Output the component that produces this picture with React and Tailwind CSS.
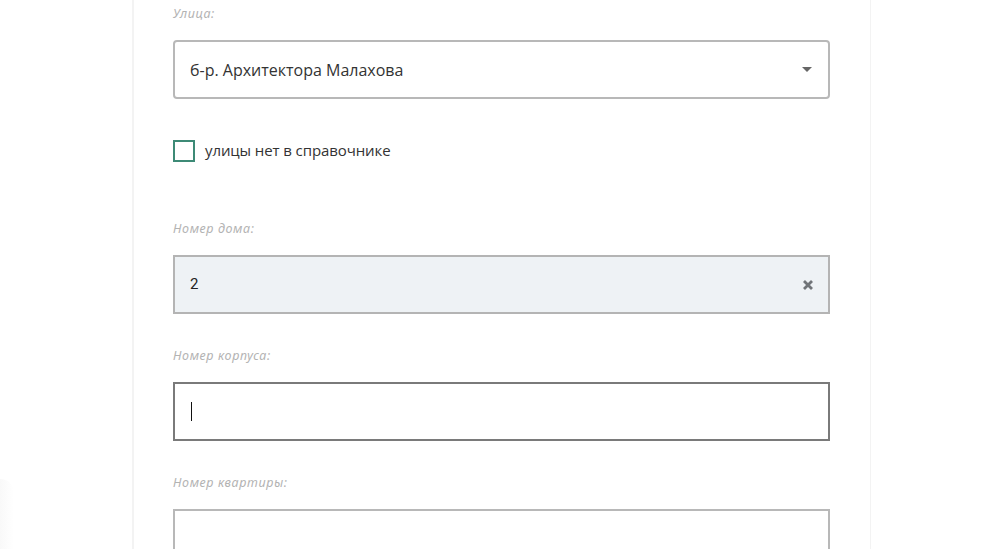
import React from "react";

function Label({ children }) {
  return (
    <div className="h-4 text-[12.5px] leading-4 italic text-[#b3b3b3] tracking-[0.6px]" style={{ fontFamily: '"Noto Sans", "Open Sans", sans-serif' }}>
      {children}
    </div>
  );
}

export default function App() {
  return (
    <div className="w-[986px] h-[549px] overflow-hidden bg-white relative" style={{ fontFamily: '"Open Sans", "Noto Sans", sans-serif' }}>
      <div className="absolute left-0 bottom-0 w-[14px] h-[70px] bg-gradient-to-r from-[#f6f6f6] to-white rounded-tr-full opacity-70" />
      <div className="ml-[132px] w-[739px] h-full border-l-2 border-r border-l-[#f3f3f3] border-r-[#f3f3f3] bg-white pl-[39px] pt-[6px]">
        <Label>Улица:</Label>
        <div className="mt-[18px] w-[657px] h-[59px] border-2 border-[#b8b8b8] rounded-[4px] flex items-center justify-between pl-[15px] pr-[16px]">
          <span className="text-[16px] text-[#333]">б-р. Архитектора Малахова</span>
          <span className="w-0 h-0 border-l-[5px] border-r-[5px] border-t-[5px] border-l-transparent border-r-transparent border-t-[#666]" />
        </div>
        <div className="mt-[41px] flex items-center gap-[10px] h-[22px]">
          <span className="w-[22px] h-[22px] border-2 border-[#3d8a76] bg-white" />
          <span className="text-[15px] text-[#333] tracking-[-0.1px] -mt-[2px]">улицы нет в справочнике</span>
        </div>
        <div className="mt-[59px]">
          <Label>Номер дома:</Label>
        </div>
        <div className="mt-[18px] w-[657px] h-[59px] border-2 border-[#b4b4b4] bg-[#eef2f5] flex items-center justify-between pl-[15px] pr-[14px]">
          <span className="text-[15px] text-[#222]" style={{ fontFamily: 'Roboto, "Open Sans", sans-serif' }}>2</span>
          <svg width="12" height="12" viewBox="0 0 12 12">
            <path d="M2 2L10 10M10 2L2 10" stroke="#707478" strokeWidth="2.8" strokeLinecap="butt" />
          </svg>
        </div>
        <div className="mt-[34px]">
          <Label>Номер корпуса:</Label>
        </div>
        <div className="mt-[18px] w-[657px] h-[59px] border-2 border-[#7a7a7a] bg-white flex items-center pl-[16px]">
          <span className="w-px h-[19px] bg-[#111]" />
        </div>
        <div className="mt-[34px]">
          <Label>Номер квартиры:</Label>
        </div>
        <div className="mt-[18px] w-[657px] h-[59px] border-2 border-[#b8b8b8] bg-white" />
      </div>
    </div>
  );
}
